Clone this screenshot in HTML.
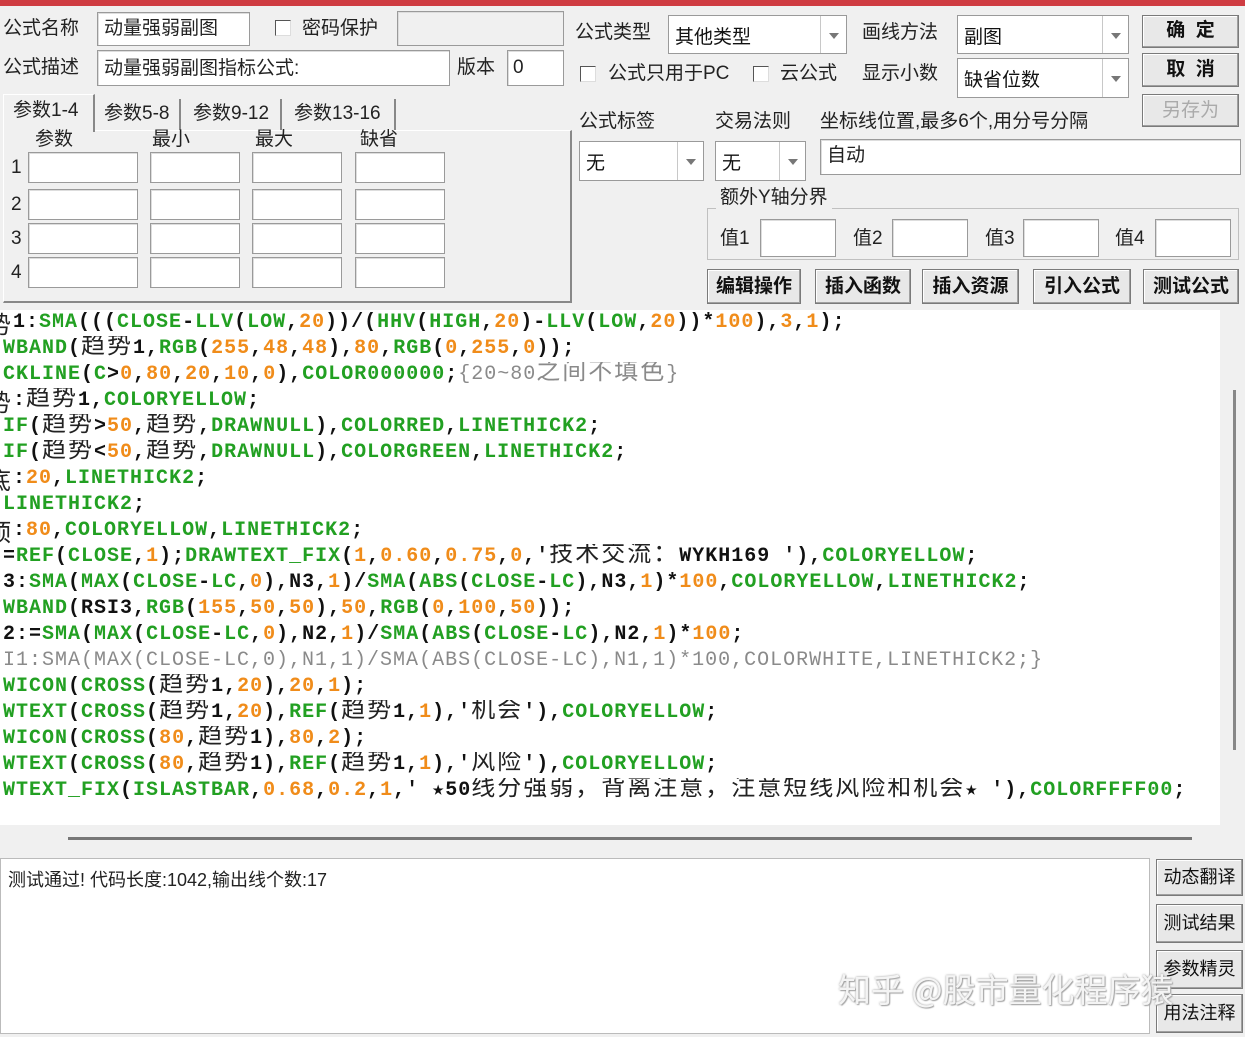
<!DOCTYPE html>
<html><head><meta charset="utf-8"><style>
*{box-sizing:border-box;margin:0;padding:0}
body{width:1245px;height:1037px;background:#f0f0f0;position:relative;overflow:hidden;font-family:"Liberation Sans","Noto Sans CJK SC",sans-serif;color:#111}
.a{position:absolute}
.t{position:absolute;font-size:19px;line-height:22px;white-space:nowrap;color:#222}
.in{position:absolute;background:#fff;border:1px solid #9a9a9a;box-shadow:inset 1px 1px 0 #ddd}
.sel{position:absolute;background:#fff;border:1px solid #9a9a9a}
.sel .ar{position:absolute;right:0;top:0;bottom:0;width:26px;border-left:1px solid #c8c8c8}
.sel .ar:after{content:"";position:absolute;left:8px;top:50%;margin-top:-2px;border-left:5px solid transparent;border-right:5px solid transparent;border-top:6px solid #777}
.sel span{position:absolute;left:6px;top:6px;font-size:19px;color:#111}
.btn{position:absolute;background:#e8e8e8;border:1px solid #7a7a7a;box-shadow:inset -1px -1px 0 #a0a0a0,inset 1px 1px 0 #fff;font-size:19px;text-align:center;color:#111;font-weight:bold}
.cb{position:absolute;width:16px;height:16px;background:#fff;border:1px solid #555;border-right-color:#ddd;border-bottom-color:#ddd}
#code{position:absolute;left:0;top:310px;width:1220px;height:515px;background:#fff;overflow:hidden}
.l{height:26px;line-height:26px;overflow:hidden;white-space:pre;font-family:"Liberation Mono",monospace;font-weight:bold;font-size:20px;letter-spacing:1px;color:#111;padding-left:3px}
g{color:#22a022}o{color:#f08c1a}
c{font-family:"Noto Sans CJK SC",sans-serif;font-weight:normal;font-size:24px;letter-spacing:2px;color:#222;line-height:0}
m{color:#8a8a8a;font-weight:normal}
.cut{display:inline-block;width:13px;height:26px;line-height:26px;overflow:hidden;margin-left:-3px;direction:rtl;vertical-align:top}
</style></head><body>
<div class="a" style="left:0;top:0;width:1245px;height:6px;background:#cf3c42"></div>

<div class="t" style="left:3px;top:18px">公式名称</div>
<div class="in" style="left:97px;top:12px;width:153px;height:34px"><span class="t" style="left:6px;top:5px">动量强弱副图</span></div>
<div class="cb" style="left:275px;top:20px"></div>
<div class="t" style="left:302px;top:18px">密码保护</div>
<div class="in" style="left:397px;top:11px;width:167px;height:35px;background:#f0f0f0"></div>
<div class="t" style="left:3px;top:57px">公式描述</div>
<div class="in" style="left:97px;top:50px;width:353px;height:36px"><span class="t" style="left:6px;top:7px">动量强弱副图指标公式:</span></div>
<div class="t" style="left:457px;top:57px">版本</div>
<div class="in" style="left:507px;top:50px;width:57px;height:36px"><span class="t" style="left:5px;top:6px">0</span></div>

<div class="a" style="left:3px;top:130px;width:569px;height:173px;border:1px solid #fff;border-right:2px solid #888;border-bottom:2px solid #888"></div>
<div class="a" style="left:3px;top:94px;width:92px;height:38px;background:#f0f0f0;border:1px solid #fff;border-right:2px solid #888;border-bottom:none"></div>
<div class="t" style="left:13px;top:100px">参数1-4</div>
<div class="a" style="left:97px;top:99px;width:84px;height:31px;border-right:2px solid #888"></div>
<div class="t" style="left:104px;top:103px">参数5-8</div>
<div class="a" style="left:183px;top:99px;width:99px;height:31px;border-right:2px solid #888"></div>
<div class="t" style="left:193px;top:103px">参数9-12</div>
<div class="a" style="left:284px;top:99px;width:112px;height:31px;border-right:2px solid #888"></div>
<div class="t" style="left:294px;top:103px">参数13-16</div>
<div class="t" style="left:35px;top:129px">参数</div>
<div class="t" style="left:152px;top:129px">最小</div>
<div class="t" style="left:255px;top:129px">最大</div>
<div class="t" style="left:360px;top:129px">缺省</div>
<div class="t" style="left:11px;top:157px">1</div><div class="t" style="left:11px;top:194px">2</div><div class="t" style="left:11px;top:228px">3</div><div class="t" style="left:11px;top:262px">4</div>
<div class="in" style="left:28px;top:152px;width:110px;height:31px"></div><div class="in" style="left:150px;top:152px;width:90px;height:31px"></div><div class="in" style="left:252px;top:152px;width:90px;height:31px"></div><div class="in" style="left:355px;top:152px;width:90px;height:31px"></div>
<div class="in" style="left:28px;top:189px;width:110px;height:31px"></div><div class="in" style="left:150px;top:189px;width:90px;height:31px"></div><div class="in" style="left:252px;top:189px;width:90px;height:31px"></div><div class="in" style="left:355px;top:189px;width:90px;height:31px"></div>
<div class="in" style="left:28px;top:223px;width:110px;height:31px"></div><div class="in" style="left:150px;top:223px;width:90px;height:31px"></div><div class="in" style="left:252px;top:223px;width:90px;height:31px"></div><div class="in" style="left:355px;top:223px;width:90px;height:31px"></div>
<div class="in" style="left:28px;top:257px;width:110px;height:31px"></div><div class="in" style="left:150px;top:257px;width:90px;height:31px"></div><div class="in" style="left:252px;top:257px;width:90px;height:31px"></div><div class="in" style="left:355px;top:257px;width:90px;height:31px"></div>

<div class="t" style="left:575px;top:22px">公式类型</div>
<div class="sel" style="left:668px;top:15px;width:179px;height:39px"><span>其他类型</span><div class="ar"></div></div>
<div class="t" style="left:862px;top:22px">画线方法</div>
<div class="sel" style="left:957px;top:15px;width:172px;height:39px"><span>副图</span><div class="ar"></div></div>
<div class="btn" style="left:1142px;top:15px;width:97px;height:33px;line-height:30px">确&nbsp;&nbsp;定</div>
<div class="cb" style="left:580px;top:66px"></div>
<div class="t" style="left:608px;top:63px">公式只用于PC</div>
<div class="cb" style="left:753px;top:66px"></div>
<div class="t" style="left:780px;top:63px">云公式</div>
<div class="t" style="left:862px;top:63px">显示小数</div>
<div class="sel" style="left:957px;top:58px;width:172px;height:40px"><span>缺省位数</span><div class="ar"></div></div>
<div class="btn" style="left:1142px;top:53px;width:97px;height:34px;line-height:31px">取&nbsp;&nbsp;消</div>
<div class="btn" style="left:1142px;top:94px;width:97px;height:33px;line-height:31px;color:#aaa;font-weight:normal">另存为</div>

<div class="t" style="left:579px;top:111px">公式标签</div>
<div class="t" style="left:715px;top:111px">交易法则</div>
<div class="t" style="left:820px;top:111px">坐标线位置,最多6个,用分号分隔</div>
<div class="sel" style="left:579px;top:141px;width:125px;height:40px"><span>无</span><div class="ar"></div></div>
<div class="sel" style="left:715px;top:141px;width:91px;height:40px"><span>无</span><div class="ar"></div></div>
<div class="in" style="left:820px;top:139px;width:421px;height:36px"><span class="t" style="left:6px;top:5px">自动</span></div>

<div class="a" style="left:707px;top:208px;width:532px;height:52px;border:1px solid #c0c0c0"></div>
<div class="t" style="left:716px;top:187px;background:#f0f0f0;padding:0 4px">额外Y轴分界</div>
<div class="t" style="left:720px;top:228px">值1</div><div class="in" style="left:760px;top:219px;width:76px;height:38px"></div>
<div class="t" style="left:853px;top:228px">值2</div><div class="in" style="left:892px;top:219px;width:76px;height:38px"></div>
<div class="t" style="left:985px;top:228px">值3</div><div class="in" style="left:1023px;top:219px;width:76px;height:38px"></div>
<div class="t" style="left:1115px;top:228px">值4</div><div class="in" style="left:1155px;top:219px;width:76px;height:38px"></div>

<div class="btn" style="left:707px;top:269px;width:94px;height:35px;line-height:33px">编辑操作</div>
<div class="btn" style="left:815px;top:269px;width:96px;height:35px;line-height:33px">插入函数</div>
<div class="btn" style="left:922px;top:269px;width:97px;height:35px;line-height:33px">插入资源</div>
<div class="btn" style="left:1033px;top:269px;width:98px;height:35px;line-height:33px">引入公式</div>
<div class="btn" style="left:1143px;top:269px;width:96px;height:35px;line-height:33px">测试公式</div>

<div id="code">
<div class="l"><c class="cut">势</c>1:<g>SMA</g>(((<g>CLOSE</g>-<g>LLV</g>(<g>LOW</g>,<o>20</o>))/(<g>HHV</g>(<g>HIGH</g>,<o>20</o>)-<g>LLV</g>(<g>LOW</g>,<o>20</o>))*<o>100</o>),<o>3</o>,<o>1</o>);</div>
<div class="l"><g>WBAND</g>(<c>趋势</c>1,<g>RGB</g>(<o>255</o>,<o>48</o>,<o>48</o>),<o>80</o>,<g>RGB</g>(<o>0</o>,<o>255</o>,<o>0</o>));</div>
<div class="l"><g>CKLINE</g>(<g>C</g>&gt;<o>0</o>,<o>80</o>,<o>20</o>,<o>10</o>,<o>0</o>),<g>COLOR000000</g>;<m>{20~80<c style="color:#8a8a8a">之间不填色</c>}</m></div>
<div class="l"><c class="cut">势</c>:<c>趋势</c>1,<g>COLORYELLOW</g>;</div>
<div class="l"><g>IF</g>(<c>趋势</c>&gt;<o>50</o>,<c>趋势</c>,<g>DRAWNULL</g>),<g>COLORRED</g>,<g>LINETHICK2</g>;</div>
<div class="l"><g>IF</g>(<c>趋势</c>&lt;<o>50</o>,<c>趋势</c>,<g>DRAWNULL</g>),<g>COLORGREEN</g>,<g>LINETHICK2</g>;</div>
<div class="l"><c class="cut">底</c>:<o>20</o>,<g>LINETHICK2</g>;</div>
<div class="l"><g>LINETHICK2</g>;</div>
<div class="l"><c class="cut">顶</c>:<o>80</o>,<g>COLORYELLOW</g>,<g>LINETHICK2</g>;</div>
<div class="l">=<g>REF</g>(<g>CLOSE</g>,<o>1</o>);<g>DRAWTEXT_FIX</g>(<o>1</o>,<o>0.60</o>,<o>0.75</o>,<o>0</o>,'<c>技术交流：</c>WYKH169 '),<g>COLORYELLOW</g>;</div>
<div class="l">3:<g>SMA</g>(<g>MAX</g>(<g>CLOSE</g>-<g>LC</g>,<o>0</o>),N3,<o>1</o>)/<g>SMA</g>(<g>ABS</g>(<g>CLOSE</g>-<g>LC</g>),N3,<o>1</o>)*<o>100</o>,<g>COLORYELLOW</g>,<g>LINETHICK2</g>;</div>
<div class="l"><g>WBAND</g>(RSI3,<g>RGB</g>(<o>155</o>,<o>50</o>,<o>50</o>),<o>50</o>,<g>RGB</g>(<o>0</o>,<o>100</o>,<o>50</o>));</div>
<div class="l">2:=<g>SMA</g>(<g>MAX</g>(<g>CLOSE</g>-<g>LC</g>,<o>0</o>),N2,<o>1</o>)/<g>SMA</g>(<g>ABS</g>(<g>CLOSE</g>-<g>LC</g>),N2,<o>1</o>)*<o>100</o>;</div>
<div class="l"><m>I1:SMA(MAX(CLOSE-LC,0),N1,1)/SMA(ABS(CLOSE-LC),N1,1)*100,COLORWHITE,LINETHICK2;}</m></div>
<div class="l"><g>WICON</g>(<g>CROSS</g>(<c>趋势</c>1,<o>20</o>),<o>20</o>,<o>1</o>);</div>
<div class="l"><g>WTEXT</g>(<g>CROSS</g>(<c>趋势</c>1,<o>20</o>),<g>REF</g>(<c>趋势</c>1,<o>1</o>),'<c>机会</c>'),<g>COLORYELLOW</g>;</div>
<div class="l"><g>WICON</g>(<g>CROSS</g>(<o>80</o>,<c>趋势</c>1),<o>80</o>,<o>2</o>);</div>
<div class="l"><g>WTEXT</g>(<g>CROSS</g>(<o>80</o>,<c>趋势</c>1),<g>REF</g>(<c>趋势</c>1,<o>1</o>),'<c>风险</c>'),<g>COLORYELLOW</g>;</div>
<div class="l"><g>WTEXT_FIX</g>(<g>ISLASTBAR</g>,<o>0.68</o>,<o>0.2</o>,<o>1</o>,' ★50<c>线分强弱，背离注意，注意短线风险和机会</c>★ '),<g>COLORFFFF00</g>;</div>
</div>
<div class="a" style="left:1233px;top:390px;width:3px;height:360px;background:#888"></div>
<div class="a" style="left:68px;top:837px;width:1124px;height:3px;background:#777"></div>

<div class="a" style="left:0;top:858px;width:1150px;height:176px;background:#fff;border:1px solid #bbb"></div>
<div class="a" style="left:8px;top:866px;font-size:18px;color:#222;white-space:nowrap">测试通过! 代码长度:1042,输出线个数:17</div>
<div class="btn" style="left:1156px;top:859px;width:87px;height:37px;line-height:35px;font-weight:normal;font-size:18px">动态翻译</div>
<div class="btn" style="left:1156px;top:904px;width:87px;height:39px;line-height:37px;font-weight:normal;font-size:18px">测试结果</div>
<div class="btn" style="left:1156px;top:950px;width:87px;height:39px;line-height:37px;font-weight:normal;font-size:18px">参数精灵</div>
<div class="btn" style="left:1156px;top:994px;width:87px;height:39px;line-height:37px;font-weight:normal;font-size:18px">用法注释</div>
<div class="a" style="left:838px;top:964px;font-size:33px;color:#f4f4f4;white-space:nowrap;text-shadow:0 0 2px #999,1px 1px 1px #aaa;font-family:'Noto Sans CJK SC',sans-serif">知乎 @股市量化程序猿</div>
</body></html>
